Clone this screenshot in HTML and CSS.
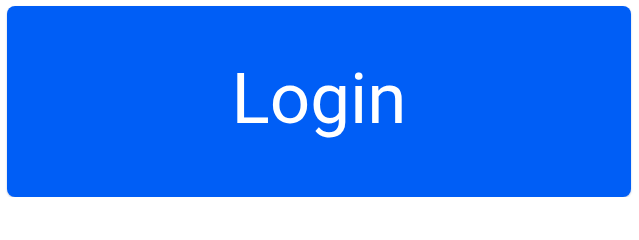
FILE: index.html
```html
<!DOCTYPE html>
<html>
<head>
<meta charset="utf-8">
<link rel="stylesheet" href="styles.css">
</head>
<body>
<div class="page">
  <button class="login-btn">Login</button>
</div>
</body>
</html>
```

FILE: styles.css
```css
html, body {
  margin: 0;
  padding: 0;
  background: #ffffff;
}
.page {
  padding: 6px 8px 0 7px;
}
.login-btn {
  display: flex;
  align-items: center;
  justify-content: center;
  width: 624px;
  height: 191px;
  border: none;
  border-radius: 8px;
  background: #005ef6;
  color: #ffffff;
  font-family: Roboto, "Liberation Sans", sans-serif;
  font-size: 71px;
  font-weight: 400;
  box-shadow: 0 1px 2px rgba(0, 40, 120, 0.25);
  padding: 0 0 6px 0;
}
```
